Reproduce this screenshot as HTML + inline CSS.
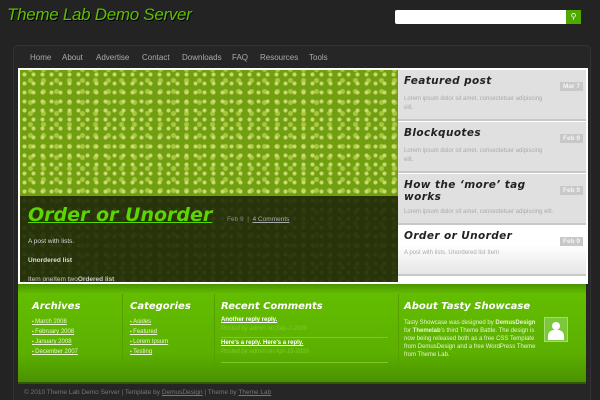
<!DOCTYPE html>
<html><head><style>
*{margin:0;padding:0;box-sizing:border-box}
html,body{width:600px;height:400px;overflow:hidden}
body{background:#232323;font-family:"Liberation Sans",sans-serif;position:relative}
.a{position:absolute}
.title{left:7px;top:5px;font-size:17px;font-style:italic;color:#5ec000;text-shadow:1px 1px 0 #000;letter-spacing:-0.3px}
.panel{left:13px;top:45px;width:578px;height:370px;background:#262626;border:1px solid #333;border-radius:5px}
.nav{top:53px;font-size:8px;color:#aaa}
.img{left:20px;top:70px;width:378px;height:212px;background:
radial-gradient(circle,#c8dc70 0 1.5px,transparent 2.5px) 0 0/9px 9px,
radial-gradient(circle,#a9c840 0 2px,transparent 3px) 4px 5px/13px 11px,
#729e12}
.ov{left:20px;top:196px;width:378px;height:86px;background:rgba(28,36,8,.88)}
.item{left:398px;width:188px;height:51px;background:#e0e0e0;border-bottom:2px solid #c8c8c8}
.item h3{position:absolute;left:6px;top:5px;font-size:10.5px;font-style:italic;font-family:"DejaVu Sans",sans-serif;color:#222;letter-spacing:.4px;font-weight:bold}
.item p{position:absolute;left:6px;font-size:6px;color:#aaa;line-height:9px;width:145px}
.date{position:absolute;right:3px;top:12px;background:#c8c8c8;color:#f4f4f4;font-size:6.5px;font-weight:bold;padding:1px 3px}
.foot{left:18px;top:284px;width:568px;height:100px;background:linear-gradient(#4a9400,#63bd00 10%,#5cb000 70%,#4a9300);border-bottom:2px solid #2f5a00}
.foot h4{position:absolute;top:17px;font-size:10px;font-style:italic;font-family:"DejaVu Sans",sans-serif;color:#fff;font-weight:bold}
.ul{position:absolute;top:33px;font-size:6px;color:#e8f5d0;line-height:10px}
.ul div:before{content:"▪ ";font-size:5px}
.ul div{text-decoration:underline}
.dv{position:absolute;top:10px;width:1px;height:78px;background:#55a000}
</style></head><body>
<div class="a title">Theme Lab Demo Server</div>
<div class="a" style="left:395px;top:10px;width:172px;height:14px;background:#fff;border-radius:2px"></div>
<div class="a" style="left:566px;top:10px;width:15px;height:14px;background:#4ea800;color:#fff;font-size:8px;text-align:center;line-height:14px">⚲</div>
<div class="a panel"></div>
<div class="a nav" style="left:30px">Home</div><div class="a nav" style="left:62px">About</div><div class="a nav" style="left:96px">Advertise</div><div class="a nav" style="left:142px">Contact</div><div class="a nav" style="left:182px">Downloads</div><div class="a nav" style="left:232px">FAQ</div><div class="a nav" style="left:260px">Resources</div><div class="a nav" style="left:309px">Tools</div>
<div class="a" style="left:18px;top:68px;width:570px;height:216px;background:#fff"></div>
<div class="a img"></div>
<div class="a ov"></div>
<div class="a" style="left:28px;top:204px;font-size:19px;font-weight:bold;font-style:italic;color:#5ed400;text-decoration:underline;font-family:'DejaVu Sans',sans-serif">Order or Unorder</div>
<div class="a" style="left:227px;top:216px;font-size:6.5px;color:#888">Feb 9 &nbsp;| &nbsp;<u style="color:#aaa">4 Comments</u></div>
<div class="a" style="left:28px;top:238px;font-size:6.5px;color:#ddd">A post with lists.</div>
<div class="a" style="left:28px;top:257px;font-size:6.5px;color:#ddd;font-weight:bold">Unordered list</div>
<div class="a" style="left:28px;top:276px;font-size:6.5px;color:#ccc">Item oneItem two<b>Ordered list</b></div>
<div class="a item" style="top:70px"><h3>Featured post</h3><span class="date">Mar 7</span><p style="top:25px">Lorem ipsum dolor sit amet, consectetuer adipiscing elit.</p></div>
<div class="a item" style="top:122px"><h3>Blockquotes</h3><span class="date">Feb 9</span><p style="top:25px">Lorem ipsum dolor sit amet, consectetuer adipiscing elit.</p></div>
<div class="a item" style="top:174px"><h3 style="line-height:12px">How the ‘more’ tag<br>works</h3><span class="date">Feb 9</span><p style="top:34px;width:175px">Lorem ipsum dolor sit amet, consectetuer adipiscing elit.</p></div>
<div class="a item" style="top:225px;background:linear-gradient(#fff 40%,#e6e6e6)"><h3>Order or Unorder</h3><span class="date">Feb 9</span><p style="top:24px;width:175px">A post with lists. Unordered list Item</p></div>
<div class="a foot">
<div class="dv" style="left:104px"></div><div class="dv" style="left:196px"></div><div class="dv" style="left:380px"></div>
<h4 style="left:14px">Archives</h4>
<div class="ul" style="left:14px"><div>March 2008</div><div>February 2008</div><div>January 2008</div><div>December 2007</div></div>
<h4 style="left:112px">Categories</h4>
<div class="ul" style="left:112px"><div>Asides</div><div>Featured</div><div>Lorem Ipsum</div><div>Testing</div></div>
<h4 style="left:203px">Recent Comments</h4>
<div class="a" style="left:203px;top:32px;font-size:6px;color:#fff;line-height:9px;width:167px"><u><b>Another reply reply.</b></u><br><i style="color:#7ec830">Posted by admin on Sep-1-2009</i><div style="border-top:1px solid #7cc92a;margin:3px 0 1px"></div><u><b>Here's a reply. Here's a reply.</b></u><br><i style="color:#7ec830">Posted by admin on Apr-15-2009</i><div style="border-top:1px solid #7cc92a;margin-top:5px"></div></div>
<h4 style="left:386px">About Tasty Showcase</h4>
<div class="a" style="left:386px;top:35px;font-size:6px;color:#e8f5d0;line-height:8px;width:140px">Tasty Showcase was designed by <b>DemusDesign</b> for <b>Themelab</b>'s third Theme Battle. The design is now being released both as a free CSS Template from DemusDesign and a free WordPress Theme from Theme Lab.</div>
<div class="a" style="left:526px;top:33px;width:24px;height:25px;background:#7bc93a;border:1px solid #a6dd70"><div class="a" style="left:7px;top:4px;width:8px;height:8px;border-radius:50%;background:#fff"></div><div class="a" style="left:3px;top:12px;width:16px;height:10px;border-radius:6px 6px 0 0;background:#fff"></div></div>
</div>
<div class="a" style="left:24px;top:389px;font-size:6.5px;color:#777">© 2010 Theme Lab Demo Server | Template by <u>DemusDesign</u> | Theme by <u>Theme Lab</u></div>
</body></html>
